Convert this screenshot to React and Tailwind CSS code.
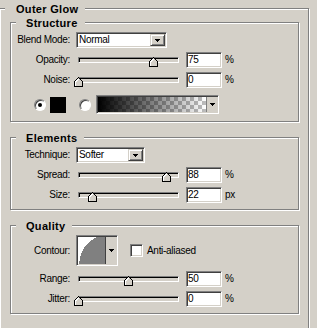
const sunken =
  'border border-t-[#808080] border-l-[#808080] border-b-white border-r-white shadow-[inset_1px_1px_0_#404040,inset_-1px_-1px_0_#d4d0c8]';
const raised =
  'border border-t-[#d4d0c8] border-l-[#d4d0c8] border-b-[#404040] border-r-[#404040] shadow-[inset_1px_1px_0_#fff,inset_-1px_-1px_0_#808080] bg-[#d4d0c8]';
const etched = 'border border-[#808080] shadow-[inset_1px_1px_0_#fff,1px_1px_0_#fff]';

function Arrow() {
  return (
    <svg width="5" height="3" shapeRendering="crispEdges">
      <path d="M0 0h5v1h-1v1h-1v1h-1v-1h-1v-1h-1z" fill="#000" />
    </svg>
  );
}

function Group({ title, className, children }) {
  return (
    <div className={`relative ${etched} ${className}`}>
      <span className="absolute left-[5px] top-[-6px] bg-[#d4d0c8] pl-[10px] pr-[7px] text-[11px] leading-[12px] font-bold tracking-[0.3px]">
        {title}
      </span>
      {children}
    </div>
  );
}

function Row({ label, className, children }) {
  return (
    <div className={`flex items-center ${className}`}>
      <span className="w-[59px] text-right">{label}</span>
      {children}
    </div>
  );
}

function Select({ value, width }) {
  return (
    <div className={`ml-[6px] ${width} h-[16px] ${sunken} bg-white p-px flex`}>
      <span className="flex-1 pl-px leading-[12px]">{value}</span>
      <div className={`${raised} w-[15px] flex items-center justify-center`}>
        <Arrow />
      </div>
    </div>
  );
}

function Thumb({ pos }) {
  return (
    <svg
      className="absolute top-[-1px]"
      style={{ left: pos - 5 }}
      width="9"
      height="10"
      shapeRendering="crispEdges"
    >
      <polygon points="4.5,0.5 8.5,4.5 8.5,9.5 0.5,9.5 0.5,4.5" fill="#d4d0c8" stroke="#000" />
      <polyline points="1.5,8.5 1.5,5 4.5,2" fill="none" stroke="#fff" />
    </svg>
  );
}

function SliderRow({ label, value, pos, unit, className }) {
  return (
    <Row label={label} className={`h-[16px] ${className}`}>
      <div
        className={`ml-[8px] relative w-[101px] h-[6px] border border-t-[#808080] border-l-[#808080] border-b-white border-r-white shadow-[inset_1px_1px_0_#000] bg-[#d4d0c8]`}
      >
        <Thumb pos={pos} />
      </div>
      <div className={`ml-[7px] w-[36px] h-[16px] ${sunken} bg-white pl-px flex items-center`}>
        {value}
      </div>
      <span className="ml-[3px]">{unit}</span>
    </Row>
  );
}

function Radio({ on }) {
  return (
    <div className="w-[12px] h-[12px] rounded-full border border-t-[#808080] border-l-[#808080] border-b-white border-r-white shadow-[inset_1px_1px_0_#404040] bg-white flex items-center justify-center">
      {on && <div className="w-[4px] h-[4px] rounded-full bg-black" />}
    </div>
  );
}

export default function App() {
  return (
    <div className="w-[317px] h-[328px] overflow-hidden bg-[#d4d0c8] font-['Liberation_Sans',Arial,sans-serif] text-[10px] leading-[12px] tracking-[-0.3px] text-black pt-[8px]">
      <div className={`relative -ml-px w-[310px] h-[340px] ${etched}`}>
        <span className="absolute left-[5px] top-[-6px] bg-[#d4d0c8] pl-[11px] pr-[7px] text-[11px] leading-[12px] font-bold tracking-[0.3px]">
          Outer Glow
        </span>

        <Group title="Structure" className="ml-[10px] mt-[13px] w-[289px] h-[100px] pt-[9px]">
          <Row label="Blend Mode:" className="h-[16px]">
            <Select value="Normal" width="w-[91px]" />
          </Row>
          <SliderRow label="Opacity:" value="75" pos={75} unit="%" className="mt-[4px]" />
          <SliderRow label="Noise:" value="0" pos={0} unit="%" className="mt-[4px]" />
          <div className="mt-[7px] h-[19px] flex items-center">
            <div className="ml-[23px]">
              <Radio on />
            </div>
            <div className="ml-[4px] w-[16px] h-[16px] bg-black" />
            <div className="ml-[13px]">
              <Radio />
            </div>
            <div className={`ml-[5px] w-[123px] h-[19px] ${sunken} p-px flex`}>
              <div className="flex-1 bg-[repeating-conic-gradient(#bdbdbd_0_25%,#fff_0_50%)] bg-[length:8px_8px]">
                <div className="h-full bg-linear-to-r from-black to-transparent" />
              </div>
              <div className="w-[11px] border-l border-[#808080] bg-[#d4d0c8] flex items-center justify-center">
                <Arrow />
              </div>
            </div>
          </div>
        </Group>

        <Group title="Elements" className="ml-[10px] mt-[15px] w-[289px] h-[73px] pt-[9px]">
          <Row label="Technique:" className="h-[16px]">
            <Select value="Softer" width="w-[69px]" />
          </Row>
          <SliderRow label="Spread:" value="88" pos={88} unit="%" className="mt-[4px]" />
          <SliderRow label="Size:" value="22" pos={14} unit="px" className="mt-[4px]" />
        </Group>

        <Group title="Quality" className="ml-[10px] mt-[15px] w-[289px] h-[89px] pt-[9px]">
          <Row label="Contour:" className="h-[31px]">
            <div className={`ml-[6px] w-[42px] h-[31px] ${sunken} p-px flex`}>
              <div className="w-[27px] bg-white">
                <svg width="27" height="27" shapeRendering="crispEdges">
                  <path d="M1 27C2 14 9 4 19 0L27 0L27 27Z" fill="#808080" />
                </svg>
              </div>
              <div className="flex-1 border-l border-[#404040] bg-[#d4d0c8] flex items-center justify-center">
                <Arrow />
              </div>
            </div>
            <div className={`ml-[12px] w-[13px] h-[13px] ${sunken} bg-white`} />
            <span className="ml-[4px]">Anti-aliased</span>
          </Row>
          <SliderRow label="Range:" value="50" pos={50} unit="%" className="mt-[5px]" />
          <SliderRow label="Jitter:" value="0" pos={0} unit="%" className="mt-[4px]" />
        </Group>
      </div>
    </div>
  );
}
